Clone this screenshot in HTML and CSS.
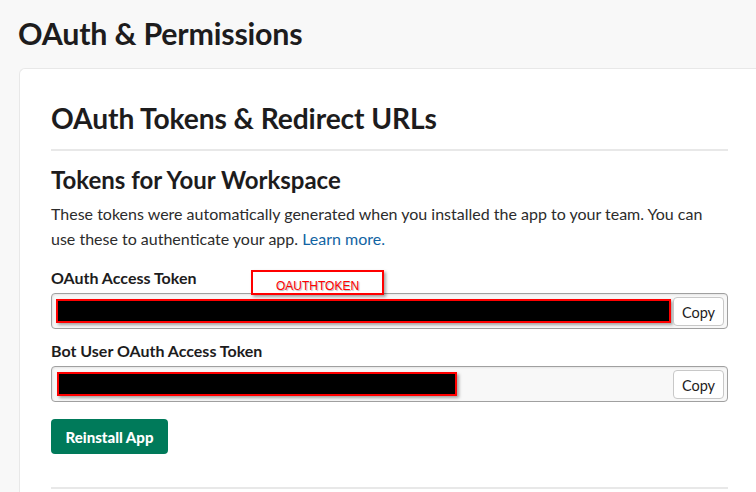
FILE: index.html
```html
<!DOCTYPE html>
<html>
<head>
<meta charset="utf-8">
<link rel="stylesheet" href="styles.css">
</head>
<body>
<h1 class="page-title">OAuth &amp; Permissions</h1>
<section class="card">
  <h2 class="card-title">OAuth Tokens &amp; Redirect URLs</h2>
  <hr class="divider">
  <h3 class="sub-title">Tokens for Your Workspace</h3>
  <p class="desc">These tokens were automatically generated when you installed the app to your team. You can use these to authenticate your app. <a class="link" href="#">Learn more.</a></p>

  <div class="field">
    <div class="label-row">
      <label class="label">OAuth Access Token</label>
      <span class="annot">OAUTHTOKEN</span>
    </div>
    <div class="token-box">
      <div class="redact redact-long"></div>
      <button class="copy">Copy</button>
    </div>
  </div>

  <div class="field">
    <div class="label-row">
      <label class="label">Bot User OAuth Access Token</label>
    </div>
    <div class="token-box">
      <div class="redact redact-short"></div>
      <button class="copy">Copy</button>
    </div>
  </div>

  <button class="reinstall">Reinstall App</button>
  <hr class="divider bottom">
</section>
</body>
</html>
```
FILE: styles.css
```css
html, body {
  margin: 0;
  padding: 0;
  overflow: hidden;
}
body {
  background: #f8f8f8;
  font-family: Lato, "Noto Sans", sans-serif;
  color: #1d1c1d;
  width: 756px;
  height: 492px;
}
.page-title {
  margin: 0;
  padding: 13px 0 0 18px;
  font-size: 30.4px;
  font-weight: 700;
  line-height: 40px;
  letter-spacing: -0.2px;
  color: #1d1c1d;
}
.card {
  margin: 15px 0 0 19px;
  width: 677px;
  background: #fff;
  border: 1px solid #e8e8e8;
  border-right: none;
  border-radius: 6px 0 0 0;
  padding: 29px 32px 40px 31px;
}
.card-title {
  margin: 0;
  font-size: 28.2px;
  font-weight: 700;
  line-height: 40px;
  letter-spacing: -0.1px;
}
.divider {
  border: none;
  border-top: 2px solid #e8e8e8;
  margin: 11px 0 0 0;
  height: 0;
}
.sub-title {
  margin: 14px 0 0 0;
  font-size: 24px;
  font-weight: 700;
  line-height: 30px;
}
.desc {
  margin: 6px 0 0 0;
  font-size: 16px;
  line-height: 25px;
  color: #2c2c2c;
  padding-right: 10px;
}
.link {
  color: #1264a3;
  text-decoration: none;
}
.field {
  display: flex;
  flex-direction: column;
  margin-top: 15px;
}
.field + .field {
  margin-top: 10px;
}
.label-row {
  position: relative;
  height: 24px;
}
.label {
  font-size: 16px;
  font-weight: 700;
  line-height: 24px;
}
.annot {
  position: absolute;
  left: 200px;
  top: 4px;
  width: 129px;
  height: 21px;
  border: 2px solid #ff0000;
  background: #fff;
  box-shadow: 2px 2px 3px rgba(0,0,0,0.35);
  color: #ff0000;
  font-family: "Liberation Sans", Arial, sans-serif;
  font-size: 12px;
  line-height: 28px;
  text-align: center;
  text-shadow: 1px 1px 1px rgba(0,0,0,0.3);
  z-index: 2;
}
.token-box {
  margin-top: 3px;
  height: 34px;
  border: 1px solid #a0a0a0;
  border-radius: 4px;
  background: #f8f8f8;
  display: flex;
  align-items: center;
  justify-content: space-between;
  padding: 0 3px 0 4px;
  box-shadow: inset 1px 1px 2px rgba(0,0,0,0.08);
}
.redact {
  height: 20px;
  background: #000;
  border: 2px solid #ff0000;
  box-shadow: 2px 2px 3px rgba(0,0,0,0.35);
}
.redact-long {
  width: 611px;
}
.redact-short {
  width: 396px;
  margin-left: 1px;
}
.copy {
  height: 29px;
  width: 51px;
  background: #fff;
  border: 1px solid #c8c8c8;
  border-radius: 4px;
  font-family: Lato, "Noto Sans", sans-serif;
  font-size: 14.5px;
  font-weight: 400;
  color: #1d1c1d;
  padding: 2px 0 0 0;
  margin-left: auto;
}
.reinstall {
  margin-top: 17px;
  display: block;
  height: 35px;
  width: 117px;
  background: #007a5a;
  border: none;
  border-radius: 4px;
  color: #fff;
  font-family: Lato, "Noto Sans", sans-serif;
  font-size: 15px;
  font-weight: 900;
  padding: 0;
}
.divider.bottom {
  margin-top: 33px;
}
```
